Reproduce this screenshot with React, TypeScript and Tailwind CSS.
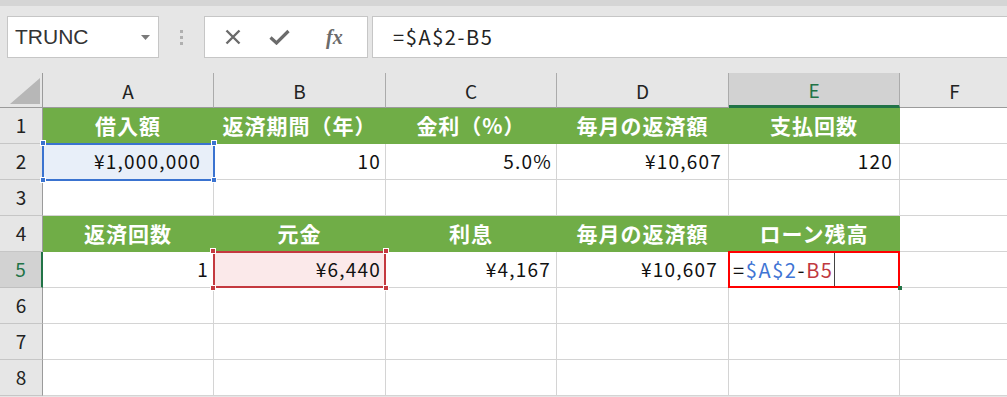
import React from "react";

const FONT = { fontFamily: "'Noto Sans CJK JP', 'Noto Sans', sans-serif" };

const letters = ["A", "B", "C", "D", "E", "F"];

type Cell = { text?: string; pr?: string };

const Handle = ({ pos, color }: { pos: string; color: string }) => (
  <span className={`absolute w-[6px] h-[6px] border border-white ${pos} ${color}`} />
);

const HeaderCell = ({ text, green }: { text: string; green: boolean }) => (
  <div
    className={`h-[36px] flex items-center justify-center border-r border-b text-[21px] tracking-[1px] font-bold ${
      green ? "bg-[#70ad47] border-[#70ad47] text-white" : "bg-white border-[#d4d4d4]"
    }`}
  >
    {text}
  </div>
);

const ValueCell = ({ cell }: { cell: Cell }) => (
  <div
    className={`h-[36px] flex items-center justify-end bg-white border-r border-b border-[#d4d4d4] text-[19px] tracking-[1.2px] text-[#111] ${
      cell.pr ?? "pr-1"
    }`}
  >
    {cell.text}
  </div>
);

const RowHead = ({ n, active }: { n: number; active?: boolean }) => (
  <div
    className={`h-[36px] flex items-center justify-center border-b text-[19px] ${
      active
        ? "bg-[#d2d2d2] border-[#c0c0c0] border-r-2 border-r-[#217346] text-[#217346]"
        : "bg-[#e6e6e6] border-[#c6c6c6] border-r border-r-[#9b9b9b] text-[#222]"
    }`}
  >
    {n}
  </div>
);

export default function App() {
  const row1 = ["借入額", "返済期間（年）", "金利（%）", "毎月の返済額", "支払回数"];
  const row2: Cell[] = [
    { text: "¥1,000,000", pr: "pr-[12px]" },
    { text: "10" },
    { text: "5.0%" },
    { text: "¥10,607", pr: "pr-[6px]" },
    { text: "120", pr: "pr-[6px]" },
    {},
  ];
  const row4 = ["返済回数", "元金", "利息", "毎月の返済額", "ローン残高"];

  return (
    <div className="w-[1007px] h-[397px] overflow-hidden bg-[#e6e6e6]" style={FONT}>
      {/* toolbar */}
      <div className="h-[6px] bg-[#d5d5d5]" />
      <div className="h-[67px] flex items-start pt-[10px] pl-[7px]">
        <div className="w-[152px] h-[42px] bg-white border border-[#c6c6c6] flex items-center justify-between pl-[7px] pr-[8px]">
          <span className="text-[21px] text-[#333]" style={{ fontFamily: "'Liberation Sans', sans-serif" }}>
            TRUNC
          </span>
          <svg width="9" height="5" viewBox="0 0 9 5">
            <path d="M0 0 L9 0 L4.5 5 Z" fill="#7a7a7a" />
          </svg>
        </div>
        <div className="w-[45px] h-[42px] flex flex-col items-center justify-center gap-[3px]">
          <span className="w-[3px] h-[3px] bg-[#b0b0b0]" />
          <span className="w-[3px] h-[3px] bg-[#b0b0b0]" />
          <span className="w-[3px] h-[3px] bg-[#b0b0b0]" />
        </div>
        <div className="w-[164px] h-[42px] bg-white border border-[#c6c6c6] flex items-center pl-[20px] gap-[28px]">
          <svg width="16" height="16" viewBox="0 0 16 16">
            <path d="M1.5 1.5 L14.5 14.5 M14.5 1.5 L1.5 14.5" stroke="#6b6b6b" strokeWidth="2.4" />
          </svg>
          <svg width="21" height="16" viewBox="0 0 21 16">
            <path d="M1.5 8.5 L7.5 14 L19.5 2" stroke="#6b6b6b" strokeWidth="3.2" fill="none" />
          </svg>
          <span
            className="text-[20px] italic font-bold text-[#6b6b6b] ml-[8px]"
            style={{ fontFamily: "'Liberation Serif', serif" }}
          >
            fx
          </span>
        </div>
        <div className="flex-1 h-[42px] ml-[4px] bg-white border border-r-0 border-[#c6c6c6] flex items-center pl-[20px]">
          <span className="text-[20px] tracking-[1.6px] text-[#222]">=$A$2-B5</span>
        </div>
      </div>

      {/* sheet */}
      <div className="grid grid-cols-[43px_171px_172px_171px_172px_171px_110px]">
        {/* column headers */}
        <div className="h-[35px] bg-[#e6e6e6] border-r border-b border-[#9b9b9b] flex items-end justify-end pr-[2px] pb-[3px]">
          <svg width="30" height="26" viewBox="0 0 30 26">
            <path d="M30 0 L30 26 L0 26 Z" fill="#b7b7b7" />
          </svg>
        </div>
        {letters.map((l) =>
          l === "E" ? (
            <div
              key={l}
              className="h-[35px] bg-[#d2d2d2] border-r border-[#ababab] border-b-[3px] border-b-[#217346] flex items-center justify-center pt-[2px] text-[19px] text-[#217346]"
            >
              {l}
            </div>
          ) : (
            <div
              key={l}
              className="h-[35px] bg-[#e6e6e6] border-r border-[#ababab] border-b border-b-[#9b9b9b] flex items-center justify-center pt-[2px] text-[19px] text-[#222]"
            >
              {l}
            </div>
          )
        )}

        {/* row 1 */}
        <RowHead n={1} />
        {row1.map((t) => (
          <HeaderCell key={t} text={t} green />
        ))}
        <HeaderCell text="" green={false} />

        {/* row 2 */}
        <RowHead n={2} />
        {row2.map((c, i) =>
          i === 0 ? (
            <div key={i} className="relative">
              <div className="h-[36px] flex items-center justify-end bg-[#e8eff9] border-r border-b border-[#d4d4d4] text-[19px] tracking-[1.2px] text-[#111] pr-[12px]">
                {c.text}
              </div>
              <div className="absolute -top-[1px] -left-[1px] -right-[1px] -bottom-[1px] border-2 border-[#3a73d0] pointer-events-none" />
              <Handle pos="-top-[4px] -left-[3px]" color="bg-[#3a73d0]" />
              <Handle pos="-top-[4px] -right-[3px]" color="bg-[#3a73d0]" />
              <Handle pos="-bottom-[3px] -left-[3px]" color="bg-[#3a73d0]" />
              <Handle pos="-bottom-[3px] -right-[3px]" color="bg-[#3a73d0]" />
            </div>
          ) : (
            <ValueCell key={i} cell={c} />
          )
        )}

        {/* row 3 */}
        <RowHead n={3} />
        {letters.map((l) => (
          <ValueCell key={l} cell={{}} />
        ))}

        {/* row 4 */}
        <RowHead n={4} />
        {row4.map((t) => (
          <HeaderCell key={t} text={t} green />
        ))}
        <HeaderCell text="" green={false} />

        {/* row 5 */}
        <RowHead n={5} active />
        <ValueCell cell={{ text: "1", pr: "pr-[4px]" }} />
        <div className="relative">
          <div className="h-[36px] flex items-center justify-end bg-[#fbe9ea] border-r border-b border-[#d4d4d4] text-[19px] tracking-[1.2px] text-[#111] pr-[4px]">
            ¥6,440
          </div>
          <div className="absolute -top-[1px] -left-[1px] right-0 bottom-0 border-2 border-[#c4393f] pointer-events-none" />
          <Handle pos="-top-[4px] -left-[4px]" color="bg-[#c4393f]" />
          <Handle pos="-top-[4px] -right-[3px]" color="bg-[#c4393f]" />
          <Handle pos="-bottom-[3px] -left-[4px]" color="bg-[#c4393f]" />
          <Handle pos="-bottom-[3px] -right-[3px]" color="bg-[#c4393f]" />
        </div>
        <ValueCell cell={{ text: "¥4,167", pr: "pr-[5px]" }} />
        <ValueCell cell={{ text: "¥10,607", pr: "pr-[10px]" }} />
        <div className="relative">
          <div className="h-[36px] flex items-center bg-white border-r border-b border-[#d4d4d4] text-[20px] tracking-[1.6px] pl-[4px]">
            <span className="text-[#111]">=</span>
            <span className="text-[#3f74d4]">$A$2</span>
            <span className="text-[#111]">-</span>
            <span className="text-[#c0393f]">B5</span>
            <span className="w-[1px] h-[34px] bg-[#444]" />
          </div>
          <div className="absolute -top-[1px] -left-[1px] right-0 bottom-0 border-2 border-[#ff0000] pointer-events-none" />
          <span className="absolute -bottom-[2px] -right-[2px] w-[4px] h-[4px] bg-[#217346]" />
        </div>
        <ValueCell cell={{}} />

        {[6, 7, 8].map((n) => (
          <React.Fragment key={n}>
            <RowHead n={n} />
            {letters.map((l) => (
              <ValueCell key={l} cell={{}} />
            ))}
          </React.Fragment>
        ))}
      </div>
    </div>
  );
}
